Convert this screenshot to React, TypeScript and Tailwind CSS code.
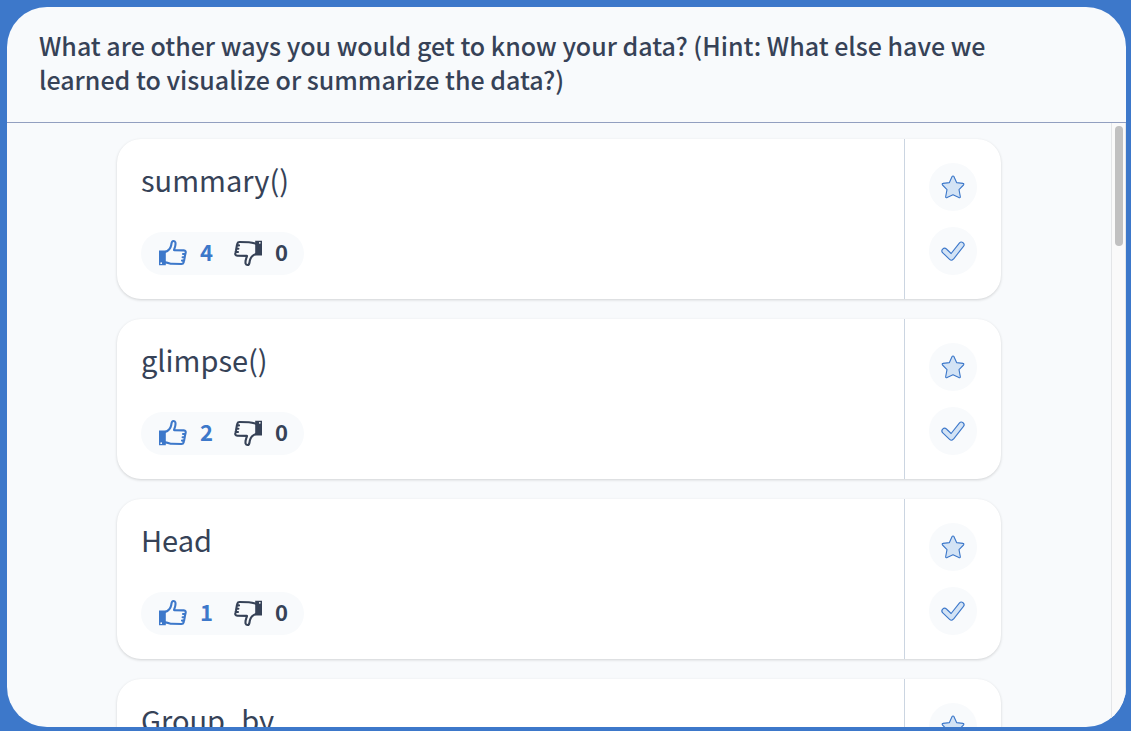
import { useRef, useState } from "react";

type Answer = { id: number; text: string; up: number; down: number };

const answers: Answer[] = [
  { id: 1, text: "summary()", up: 4, down: 0 },
  { id: 2, text: "glimpse()", up: 2, down: 0 },
  { id: 3, text: "Head", up: 1, down: 0 },
  { id: 4, text: "Group_by", up: 1, down: 0 },
];

function ThumbIcon({ flipped = false }: { flipped?: boolean }) {
  return (
    <svg viewBox="0 0 32 32" className={flipped ? "size-8 rotate-180" : "size-8"} fill="none" aria-hidden="true">
      <path
        d="M2 13.6h6.8v14.7H2zM3.3 26.2a.9.9 0 1 0 1.8 0a.9.9 0 1 0-1.8 0z"
        fill="currentColor"
        fillRule="evenodd"
      />
      <path
        d="M8 15C11 14 13.6 11 14.2 8.2C14.6 6.3 14.4 4 16.4 4C18.6 4 18.7 6 18.4 8C18.2 9.8 17.4 11.4 17 13.1L26.8 13.4C28.6 13.5 29 14.6 28.6 16L28 18.5L27.4 22L26.6 25.4C26.3 26.7 25.6 27 24.4 27L15 26.8C12.6 26.7 11 25.4 8 25.4M28.4 17H26M27.8 20.3H25.6M27.2 23.6H25"
        stroke="currentColor"
        strokeWidth="2.1"
        strokeLinejoin="round"
        strokeLinecap="round"
      />
    </svg>
  );
}

function StarIcon() {
  return (
    <svg viewBox="0 0 24 24" className="size-6" aria-hidden="true">
      <path
        d="M11.1 1.6a1 1 0 0 1 1.8 0L15.6 7.6L22 8.4a.9.9 0 0 1 .5 1.6L18 14.6L19.3 21.6a.9.9 0 0 1-1.4 1L12 19.8L6.1 22.6a.9.9 0 0 1-1.4-1L6 14.6L1.5 10a.9.9 0 0 1 .5-1.6L8.4 7.6Z"
        fill="#d3e3f5"
        stroke="#3d78ca"
        strokeWidth="1.1"
        strokeLinejoin="round"
      />
    </svg>
  );
}

function CheckIcon() {
  return (
    <svg viewBox="0 0 24 24" className="size-6" fill="none" strokeLinecap="round" strokeLinejoin="round" aria-hidden="true">
      <path d="M3.6 11.9L10.4 18.4L20.4 5.8" stroke="#3d78ca" strokeWidth="6.4" />
      <path d="M3.6 11.9L10.4 18.4L20.4 5.8" stroke="#d3e3f5" strokeWidth="4.2" />
    </svg>
  );
}

function AnswerCard({ answer }: { answer: Answer }) {
  return (
    <li className="flex min-h-40 rounded-3xl bg-white shadow-[0_1px_3px_rgba(0,0,0,0.16)]">
      <div className="flex min-w-0 flex-1 flex-col items-start justify-between p-6">
        <p className="text-[29px] leading-8">{answer.text}</p>
        <div className="flex items-center gap-[19px] rounded-full bg-[#f8fafc] px-4 pt-[5px] pb-[6px] text-[22px] leading-7 font-bold">
          <button type="button" aria-label={`Upvote ${answer.text}`} className="flex items-center gap-[11px] text-[#3d78ca]">
            <ThumbIcon />
            <span className="pb-1">{answer.up}</span>
          </button>
          <button type="button" aria-label={`Downvote ${answer.text}`} className="flex items-center gap-[11px]">
            <ThumbIcon flipped />
            <span className="pb-1">{answer.down}</span>
          </button>
        </div>
      </div>
      <div className="flex flex-col gap-4 border-l border-[#cbd5e1] p-6">
        <button type="button" aria-label="Star answer" className="flex size-12 items-center justify-center rounded-full bg-[#f8fafc]">
          <StarIcon />
        </button>
        <button type="button" aria-label="Mark as answered" className="flex size-12 items-center justify-center rounded-full bg-[#f8fafc]">
          <CheckIcon />
        </button>
      </div>
    </li>
  );
}

export default function App() {
  const list = useRef<HTMLDivElement>(null);
  const [offset, setOffset] = useState(0);

  const onScroll = () => {
    const el = list.current;
    if (!el) return;
    const range = el.scrollHeight - el.clientHeight;
    setOffset(range > 0 ? (el.scrollTop / range) * (el.clientHeight - 126) : 0);
  };

  return (
    <div className="h-screen bg-[#3d78ca] pt-[7px] pr-[5px] pb-1 pl-[7px] font-['Noto_Sans_CJK_SC',sans-serif] text-[#364257]">
      <main className="flex h-full flex-col overflow-hidden rounded-[40px] bg-[#f8fafc]">
        <header className="border-b border-[#929fc0] px-8 pt-[21px] pb-[26px]">
          <h1 className="max-w-5xl text-[25px] leading-[34px] font-medium">
            What are other ways you would get to know your data? (Hint: What else have we learned to visualize or summarize the data?)
          </h1>
        </header>
        <div className="flex min-h-0 flex-1">
          <div ref={list} onScroll={onScroll} className="min-w-0 flex-1 overflow-y-auto [scrollbar-width:none]">
            <ul className="mx-auto flex max-w-[884px] flex-col gap-5 py-4">
              {answers.map((answer) => (
                <AnswerCard key={answer.id} answer={answer} />
              ))}
            </ul>
          </div>
          <div className="w-[15px] border-x border-[#e4e6e8] bg-[#fafafa] px-[3px] pt-[3px]" aria-hidden="true">
            <div className="h-[120px] w-2 rounded-full bg-[#c1c1c1]" style={{ transform: `translateY(${offset}px)` }} />
          </div>
        </div>
      </main>
    </div>
  );
}
